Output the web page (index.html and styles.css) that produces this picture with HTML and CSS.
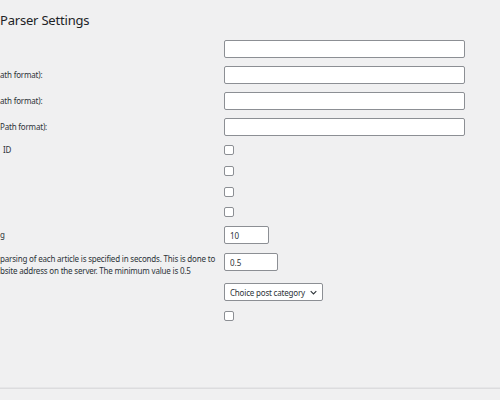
FILE: index.html
```html
<!DOCTYPE html>
<html lang="en">
<head>
<meta charset="utf-8">
<title>Parser Settings</title>
<link rel="stylesheet" href="styles.css">
</head>
<body>
<div class="wrap">
  <h1 class="title">Parser Settings</h1>
  <div class="form">
    <div class="row h26"><div class="label"></div><div class="field"><input class="input wide" type="text"></div></div>
    <div class="row h26"><div class="label">ath format):</div><div class="field"><input class="input wide" type="text"></div></div>
    <div class="row h26"><div class="label">ath format):</div><div class="field"><input class="input wide" type="text"></div></div>
    <div class="row h26"><div class="label">Path format):</div><div class="field"><input class="input wide" type="text"></div></div>
    <div class="row h20"><div class="label indent">ID</div><div class="field"><input class="check" type="checkbox"></div></div>
    <div class="row h21"><div class="label"></div><div class="field"><input class="check" type="checkbox"></div></div>
    <div class="row h21"><div class="label"></div><div class="field"><input class="check" type="checkbox"></div></div>
    <div class="row h20"><div class="label"></div><div class="field"><input class="check" type="checkbox"></div></div>
    <div class="row h26"><div class="label">g</div><div class="field"><input class="input num" type="text" value="10"></div></div>
    <div class="row h28"><div class="label desc"><span class="line">parsing of each article is specified in seconds. This is done to</span><span class="line">bsite address on the server. The minimum value is 0.5</span></div><div class="field"><input class="input num2" type="text" value="0.5"></div></div>
    <div class="row h32"><div class="label"></div><div class="field"><div class="select"><span>Choice post category</span><svg class="chev" viewBox="0 0 10 6" width="7" height="5"><path d="M1 1 L5 5 L9 1" fill="none" stroke="#2c3338" stroke-width="1.5"/></svg></div></div></div>
    <div class="row h16"><div class="label"></div><div class="field"><input class="check" type="checkbox"></div></div>
  </div>
</div>
<div class="footer"></div>
</body>
</html>
```

FILE: styles.css
```css
html, body {
  margin: 0;
  padding: 0;
}
body {
  background: #f0f0f1;
  color: #2c3338;
  font-family: "Noto Sans", "Open Sans", sans-serif;
  height: 400px;
  display: flex;
  flex-direction: column;
  overflow: hidden;
}
.wrap {
  flex: 1;
}
.title {
  margin: 0;
  height: 36px;
  box-sizing: border-box;
  padding-top: 11px;
  font-size: 13px;
  line-height: 18px;
  letter-spacing: -0.2px;
  font-weight: 400;
  color: #1d2327;
}
.row {
  display: grid;
  grid-template-columns: 224px 1fr;
  align-items: center;
}
.h16 { height: 16px; }
.h20 { height: 20px; }
.h21 { height: 21px; }
.h26 { height: 26px; }
.h28 { height: 28px; }
.h32 { height: 32px; }
.label {
  font-size: 8px;
  line-height: 12px;
  letter-spacing: -0.19px;
  white-space: nowrap;
  overflow: hidden;
  color: #2c3338;
}
.label .line {
  display: block;
}
.desc {
  padding-top: 5px;
}
.indent {
  padding-left: 3px;
}
.field {
  display: flex;
  align-items: center;
}
.input {
  box-sizing: border-box;
  height: 18px;
  margin: 0;
  border: 1px solid #8c8f94;
  border-radius: 2px;
  background: #fff;
  padding: 0 5px;
  font-family: inherit;
  font-size: 8px;
  color: #2c3338;
  outline: none;
}
.wide { width: 241px; }
.num { width: 45px; }
.num2 { width: 54px; }
.check {
  appearance: none;
  -webkit-appearance: none;
  box-sizing: border-box;
  width: 10px;
  height: 10px;
  margin: 0;
  border: 1px solid #8c8f94;
  border-radius: 2px;
  background: #fff;
}
.select {
  box-sizing: border-box;
  width: 99px;
  height: 18px;
  border: 1px solid #8c8f94;
  border-radius: 2px;
  background: #fff;
  display: flex;
  align-items: center;
  justify-content: space-between;
  padding: 0 5px 0 5px;
  font-size: 8px;
  letter-spacing: -0.19px;
  color: #2c3338;
  white-space: nowrap;
}
.chev {
  flex: none;
}
.footer {
  height: 11px;
  border-top: 1px solid #dcdcde;
  box-shadow: 0 -1px 0 #e6e6e8;
}
```
